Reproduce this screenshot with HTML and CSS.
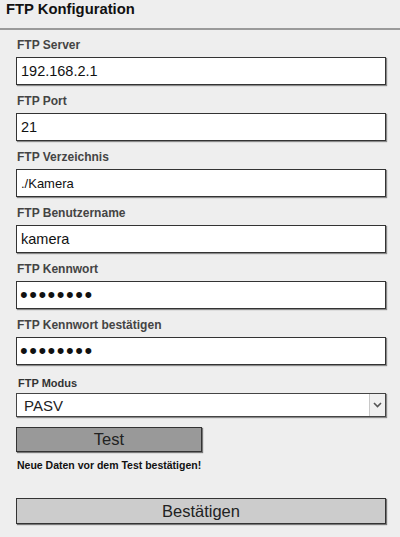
FILE: index.html
```html
<!DOCTYPE html>
<html lang="de">
<head>
<meta charset="utf-8">
<title>FTP Konfiguration</title>
<link rel="stylesheet" href="styles.css">
</head>
<body>
<div class="panel">
  <h1 class="title">FTP Konfiguration</h1>
  <form class="form">
    <div class="field">
      <label class="label">FTP Server</label>
      <input class="input" type="text" value="192.168.2.1">
    </div>
    <div class="field">
      <label class="label">FTP Port</label>
      <input class="input" type="text" value="21">
    </div>
    <div class="field">
      <label class="label">FTP Verzeichnis</label>
      <input class="input input-small" type="text" value="./Kamera">
    </div>
    <div class="field">
      <label class="label">FTP Benutzername</label>
      <input class="input" type="text" value="kamera">
    </div>
    <div class="field">
      <label class="label">FTP Kennwort</label>
      <input class="input pw" type="password" value="12345678">
    </div>
    <div class="field">
      <label class="label">FTP Kennwort bestätigen</label>
      <input class="input pw" type="password" value="12345678">
    </div>
    <div class="field field-mode">
      <label class="label label-small">FTP Modus</label>
      <div class="select-wrap">
        <select class="select">
          <option>PASV</option>
          <option>PORT</option>
        </select>
        <span class="select-arrow"><svg width="9" height="6" viewBox="0 0 9 6"><path d="M1 1 L4.5 4.5 L8 1" fill="none" stroke="#555" stroke-width="1.6"/></svg></span>
      </div>
    </div>
    <button class="btn btn-test" type="button">Test</button>
    <p class="note">Neue Daten vor dem Test bestätigen!</p>
    <button class="btn btn-confirm" type="button">Bestätigen</button>
  </form>
</div>
</body>
</html>
```
FILE: styles.css
```css
html, body {
  margin: 0;
  padding: 0;
  background: #eeeeee;
}
body {
  font-family: "Liberation Sans", Arial, sans-serif;
  color: #222;
}
.panel {
  width: 400px;
  height: 537px;
  box-sizing: border-box;
}
.title {
  margin: 0;
  padding: 1px 0 0 6px;
  height: 30px;
  line-height: 17px;
  font-size: 14.8px;
  font-weight: bold;
  color: #111;
  border-bottom: 2px solid #9a9a9a;
  box-sizing: border-box;
}
.form {
  display: flex;
  flex-direction: column;
  padding: 8px 14px 0 16px;
}
.field {
  display: flex;
  flex-direction: column;
  height: 56px;
}
.label {
  font-size: 12px;
  font-weight: bold;
  color: #444;
  height: 19px;
  line-height: 14px;
  padding-left: 1px;
}
.label-small {
  font-size: 11px;
  color: #333;
  height: 16px;
  line-height: 13px;
  padding-left: 2px;
}
.input {
  width: 370px;
  height: 28px;
  box-sizing: border-box;
  border: 1px solid #333;
  box-shadow: 1px 1px 1px #8a8a8a;
  background: #fff;
  font-family: "Liberation Sans", Arial, sans-serif;
  font-size: 14.5px;
  color: #111;
  padding: 0 4px;
  margin: 0;
  outline: none;
}
.input-small {
  font-size: 13px;
}
.pw {
  font-size: 22px;
  letter-spacing: 1.5px;
  padding-left: 3px;
}
.field-mode {
  height: 50px;
  margin-top: 3px;
}
.select-wrap {
  position: relative;
  width: 370px;
  height: 24px;
}
.select {
  appearance: none;
  -webkit-appearance: none;
  width: 370px;
  height: 24px;
  box-sizing: border-box;
  border: 1px solid #444;
  box-shadow: 1px 1px 1px #8a8a8a;
  background: #fff;
  font-family: "Liberation Sans", Arial, sans-serif;
  font-size: 15px;
  color: #222;
  padding: 0 7px;
  margin: 0;
  border-radius: 0;
  outline: none;
}
.select-arrow {
  position: absolute;
  right: 1px;
  top: 1px;
  width: 15px;
  height: 22px;
  background: #f0f0f0;
  border-left: 1px solid #c8c8c8;
  display: flex;
  align-items: center;
  justify-content: center;
  pointer-events: none;
}
.btn {
  font-family: "Liberation Sans", Arial, sans-serif;
  font-size: 16.5px;
  color: #222;
  border: 1px solid #333;
  box-shadow: 1px 1px 1px #777;
  border-radius: 0;
  margin: 0;
  padding: 0;
  box-sizing: border-box;
}
.btn-test {
  width: 186px;
  height: 25px;
  background: #999;
}
.note {
  margin: 7px 0 0 1px;
  font-size: 10.5px;
  font-weight: bold;
  color: #111;
  line-height: 13px;
  height: 13px;
}
.btn-confirm {
  width: 370px;
  height: 26px;
  background: #cccccc;
  margin-top: 26px;
}
```
